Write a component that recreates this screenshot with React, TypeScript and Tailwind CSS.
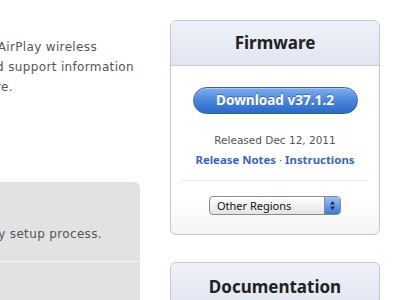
import React from 'react';

const Line: React.FC<{ w: string; children: React.ReactNode }> = ({ w, children }) => (
  <div className={`flex justify-end whitespace-nowrap ${w}`}>
    <span>{children}</span>
  </div>
);

const App: React.FC = () => {
  return (
    <div className="flex w-[400px] h-[300px] overflow-hidden bg-white font-['Noto_Sans',sans-serif]">
      {/* left column, cut off by the window */}
      <div className="w-[140px] shrink-0 overflow-hidden font-['DejaVu_Sans',sans-serif] tracking-[0.35px]">
        <div className="pt-[37px] text-[12px] leading-[20px] text-[#555]">
          <Line w="w-[97px]">Learn how to set up your AirPlay wireless</Line>
          <Line w="w-[134px]">speakers, and find support information</Line>
          <Line w="w-[13px]">for your hardware.</Line>
        </div>
        <div className="mt-[85px] rounded-tr-md bg-[#e2e2e2]">
          <div className="pt-[42px] pb-[17px] text-[12px] leading-[20px] text-[#555]">
            <Line w="w-[102px]">Walk through the easy setup process.</Line>
          </div>
          <div className="h-[40px] border-t border-[#f7f7f7] bg-[#e2e2e2]" />
        </div>
      </div>

      {/* sidebar */}
      <div className="ml-[30px] w-[210px] shrink-0">
        <div className="mt-[20px] rounded-md border border-[#c4c6cc] bg-gradient-to-b from-white from-85% to-[#f3f3f3] overflow-hidden">
          <div className="h-[45px] flex items-center justify-center border-b border-[#c9cdd6] bg-gradient-to-b from-[#eef1f8] to-[#e1e6f1]">
            <span className="text-[17px] font-bold text-[#222]">Firmware</span>
          </div>
          <div className="flex flex-col items-center pt-[21px] pb-[19px]">
            <button className="w-[165px] h-[27px] rounded-full border border-[#2d5fb3] bg-gradient-to-b from-[#7eaef0] via-[#4a86dc] to-[#2f68c8] text-[13.6px] font-bold text-white [text-shadow:0_-1px_0_rgba(0,0,0,0.3)] shadow-[inset_0_1px_0_rgba(255,255,255,0.35)]">
              Download v37.1.2
            </button>
            <div className="mt-[16px] font-['DejaVu_Sans',sans-serif] text-[10.5px] leading-[20px] text-[#555]">Released Dec 12, 2011</div>
            <div className="text-[11.4px] leading-[20px] font-bold text-[#3a66bb]">
              Release Notes <span className="font-normal">·</span> Instructions
            </div>
            <div className="mt-[10px] w-[186px] border-t border-[#e6e6e6]" />
            <div className="mt-[15px] w-[132px] h-[19px] flex rounded-[4px] border border-[#8a8a8a] bg-gradient-to-b from-white to-[#e4e4e4] overflow-hidden">
              <span className="flex-1 pl-[7px] text-[11px] leading-[17px] text-[#111]">Other Regions</span>
              <span className="w-[16px] flex items-center justify-center border-l border-[#6b8fc4] bg-gradient-to-b from-[#9cc0f2] to-[#3d78d4]">
                <svg width="7" height="11" viewBox="0 0 7 11">
                  <path d="M3.5 1 L6 4.5 L1 4.5 Z" fill="#1b2b48" />
                  <path d="M3.5 10 L6 6.5 L1 6.5 Z" fill="#1b2b48" />
                </svg>
              </span>
            </div>
          </div>
        </div>

        <div className="mt-[27px] rounded-t-md border border-b-0 border-[#c4c6cc] overflow-hidden">
          <div className="h-[45px] flex items-center justify-center bg-gradient-to-b from-[#eef1f8] to-[#e1e6f1]">
            <span className="mt-[3px] text-[17px] font-bold text-[#222]">Documentation</span>
          </div>
        </div>
      </div>
    </div>
  );
};

export default App;
